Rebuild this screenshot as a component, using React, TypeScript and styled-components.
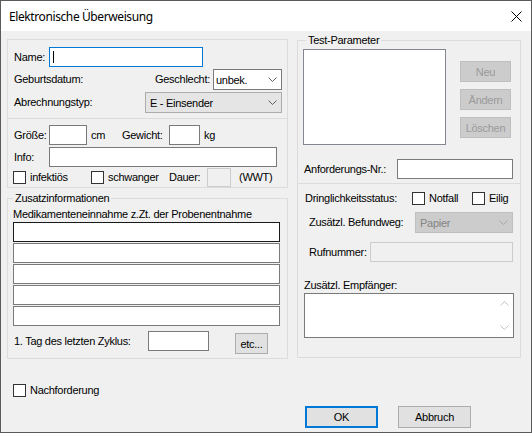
import React from 'react';
import styled, { createGlobalStyle } from 'styled-components';

const GlobalStyle = createGlobalStyle`
  html, body { margin: 0; padding: 0; background: #f0f0f0; }
  * { box-sizing: border-box; }
`;

const Window = styled.div`
  width: 532px;
  height: 433px;
  border: 1px solid #5b5b5b;
  background: #f0f0f0;
  display: flex;
  flex-direction: column;
  font-family: "Liberation Sans", Arial, sans-serif;
  font-size: 11px;
  letter-spacing: -0.28px;
  color: #000;
  overflow: hidden;
`;

const TitleBar = styled.div`
  height: 30px;
  flex-shrink: 0;
  background: #fff;
  display: flex;
  align-items: center;
  padding-left: 8px;
`;

const Title = styled.div`
  flex: 1;
  font-family: "Noto Sans", sans-serif;
  font-size: 12px;
  letter-spacing: -0.4px;
`;

const CloseBtn = styled.div`
  width: 30px;
  height: 30px;
  display: flex;
  align-items: center;
  justify-content: center;
`;

const Body = styled.div`
  display: flex;
  flex-direction: column;
  padding-left: 6px;
`;

const Columns = styled.div`
  display: flex;
  align-items: flex-start;
  gap: 9px;
`;

const Column = styled.div<{ $w: number; $mt: number }>`
  width: ${p => p.$w}px;
  margin-top: ${p => p.$mt}px;
  display: flex;
  flex-direction: column;
`;

const Panel = styled.div<{ $noTop?: boolean; $pad: string }>`
  border: 1px solid #dcdcdc;
  ${p => (p.$noTop ? 'border-top: none;' : '')}
  padding: ${p => p.$pad};
  display: flex;
  flex-direction: column;
`;

const Group = styled.fieldset<{ $pad: string; $mt?: number }>`
  margin: ${p => p.$mt ?? 0}px 0 0 0;
  min-width: 0;
  border: 1px solid #dcdcdc;
  padding: ${p => p.$pad};
  display: flex;
  flex-direction: column;
`;

const Legend = styled.legend<{ $ml?: number }>`
  padding: 0 2px;
  margin-left: ${p => p.$ml ?? 0}px;
  line-height: 13px;
  font-size: 11px;
`;

const Row = styled.div<{ $h: number; $mt?: number; $align?: string }>`
  display: flex;
  align-items: ${p => p.$align ?? 'center'};
  height: ${p => p.$h}px;
  margin-top: ${p => p.$mt ?? 0}px;
  flex-shrink: 0;
`;

const Label = styled.span<{ $w?: number; $ml?: number; $lh?: number }>`
  ${p => (p.$w ? `width: ${p.$w}px;` : '')}
  margin-left: ${p => p.$ml ?? 0}px;
  line-height: ${p => p.$lh ?? 13}px;
  white-space: nowrap;
  flex-shrink: 0;
`;

const Spacer = styled.div<{ $fixed?: number }>`
  flex: ${p => (p.$fixed !== undefined ? `0 0 ${p.$fixed}px` : '1')};
`;

const TextBox = styled.div<{ $w?: number; $h?: number; $tone?: 'focus' | 'hover' | 'normal'; $mt?: number; $ml?: number }>`
  ${p => (p.$w ? `width: ${p.$w}px;` : 'align-self: stretch;')}
  height: ${p => p.$h ?? 20}px;
  margin-top: ${p => p.$mt ?? 0}px;
  margin-left: ${p => p.$ml ?? 0}px;
  flex-shrink: 0;
  background: #fff;
  border: 1px solid
    ${p => (p.$tone === 'focus' ? '#0078d7' : p.$tone === 'hover' ? '#1a1a1a' : '#7a7a7a')};
  display: flex;
  align-items: center;
  padding-left: 3px;
`;

const Caret = styled.span`
  width: 1px;
  height: 12px;
  background: #000;
`;

const DisabledBox = styled.div<{ $w: number; $h: number; $ml?: number }>`
  width: ${p => p.$w}px;
  height: ${p => p.$h}px;
  margin-left: ${p => p.$ml ?? 0}px;
  flex-shrink: 0;
  background: #f0f0f0;
  border: 1px solid #cccccc;
`;

const comboStyles = {
  edit: { bg: '#fff', border: '#7a7a7a', color: '#000', pad: 2 },
  list: { bg: '#e5e5e5', border: '#acacac', color: '#000', pad: 4 },
  disabled: { bg: '#cccccc', border: '#bfbfbf', color: '#838383', pad: 4 },
};

const Combo = styled.div<{ $w: number; $variant: 'edit' | 'list' | 'disabled'; $ml?: number }>`
  width: ${p => p.$w}px;
  height: 21px;
  margin-left: ${p => p.$ml ?? 0}px;
  flex-shrink: 0;
  display: flex;
  align-items: center;
  background: ${p => comboStyles[p.$variant].bg};
  border: 1px solid ${p => comboStyles[p.$variant].border};
  color: ${p => comboStyles[p.$variant].color};
  padding-left: ${p => comboStyles[p.$variant].pad}px;
  padding-right: 4px;
`;

const ComboText = styled.span`
  flex: 1;
  white-space: nowrap;
`;

const Chevron = ({ color, up }: { color: string; up?: boolean }) => (
  <svg width="9" height="5" viewBox="0 0 9 5" style={{ display: 'block' }}>
    <polyline
      points={up ? '0.5,4.5 4.5,0.5 8.5,4.5' : '0.5,0.5 4.5,4.5 8.5,0.5'}
      fill="none"
      stroke={color}
      strokeWidth="1"
    />
  </svg>
);

const CheckItem = styled.div<{ $w?: number; $ml?: number }>`
  display: flex;
  align-items: center;
  ${p => (p.$w ? `width: ${p.$w}px;` : '')}
  margin-left: ${p => p.$ml ?? 0}px;
  flex-shrink: 0;
`;

const CheckBox = styled.span`
  width: 13px;
  height: 13px;
  background: #fff;
  border: 1px solid #333;
  flex-shrink: 0;
  margin-right: 4px;
`;

const Button = styled.div<{ $w: number; $h: number; $disabled?: boolean; $default?: boolean; $mt?: number; $ml?: number }>`
  width: ${p => p.$w}px;
  height: ${p => p.$h}px;
  margin-top: ${p => p.$mt ?? 0}px;
  margin-left: ${p => p.$ml ?? 0}px;
  flex-shrink: 0;
  display: flex;
  align-items: center;
  justify-content: center;
  background: ${p => (p.$disabled ? '#cccccc' : '#e1e1e1')};
  border: ${p => (p.$default ? '2px solid #0078d7' : `1px solid ${p.$disabled ? '#bfbfbf' : '#adadad'}`)};
  color: ${p => (p.$disabled ? '#9a9a9a' : '#000')};
`;

const ListBox = styled.div`
  width: 143px;
  height: 96px;
  background: #fff;
  border: 1px solid #828790;
  flex-shrink: 0;
`;

const ButtonStack = styled.div`
  display: flex;
  flex-direction: column;
  gap: 7px;
  margin-left: 14px;
  margin-top: 12px;
`;

const MultiLine = styled.div`
  height: 45px;
  margin-top: 1px;
  background: #fff;
  border: 1px solid #7a7a7a;
  display: flex;
  justify-content: flex-end;
`;

const ScrollCol = styled.div`
  width: 18px;
  display: flex;
  flex-direction: column;
  align-items: center;
  justify-content: space-between;
  padding: 7px 0 7px 0;
`;

const Footer = styled.div`
  display: flex;
  flex-direction: column;
`;

export default function App() {
  return (
    <>
      <GlobalStyle />
      <Window>
        <TitleBar>
          <Title>Elektronische Überweisung</Title>
          <CloseBtn>
            <svg width="11" height="11" viewBox="0 0 11 11">
              <path d="M0.5 0.5 L10.5 10.5 M10.5 0.5 L0.5 10.5" stroke="#000" strokeWidth="1" />
            </svg>
          </CloseBtn>
        </TitleBar>
        <Body>
          <Columns>
            <Column $w={281} $mt={8}>
              <Panel $pad="7px 5px 5px 6px">
                <Row $h={20}>
                  <Label $w={35}>Name:</Label>
                  <TextBox $w={154} $tone="focus">
                    <Caret />
                  </TextBox>
                </Row>
                <Row $h={21} $mt={2}>
                  <Label>Geburtsdatum:</Label>
                  <Spacer />
                  <Label>Geschlecht:</Label>
                  <Combo $w={69} $variant="edit" $ml={3}>
                    <ComboText>unbek.</ComboText>
                    <Chevron color="#606060" />
                  </Combo>
                </Row>
                <Row $h={21} $mt={2}>
                  <Label $w={131}>Abrechnungstyp:</Label>
                  <Combo $w={137} $variant="list">
                    <ComboText>E - Einsender</ComboText>
                    <Chevron color="#606060" />
                  </Combo>
                </Row>
              </Panel>
              <Panel $noTop $pad="6px 5px 0 6px">
                <Row $h={20}>
                  <Label $w={35}>Größe:</Label>
                  <TextBox $w={38} />
                  <Label $w={31} $ml={4}>cm</Label>
                  <Label $w={47}>Gewicht:</Label>
                  <TextBox $w={31} />
                  <Label $ml={4}>kg</Label>
                </Row>
                <Row $h={20} $mt={2}>
                  <Label $w={35}>Info:</Label>
                  <TextBox $w={228} />
                </Row>
                <Row $h={20}>
                  <CheckItem $w={78} $ml={-1}>
                    <CheckBox />
                    <Label>infektiös</Label>
                  </CheckItem>
                  <CheckItem $w={78}>
                    <CheckBox />
                    <Label>schwanger</Label>
                  </CheckItem>
                  <Label $w={38}>Dauer:</Label>
                  <DisabledBox $w={24} $h={19} />
                  <Label $ml={8}>(WWT)</Label>
                </Row>
              </Panel>
              <Group $pad="3px 7px 5px 5px" $mt={4}>
                <Legend>Zusatzinformationen</Legend>
                <Label>Medikamenteneinnahme z.Zt. der Probenentnahme</Label>
                <TextBox $mt={1} $tone="hover" />
                <TextBox $mt={1} />
                <TextBox $mt={1} />
                <TextBox $mt={1} />
                <TextBox $mt={1} />
                <Row $h={22} $mt={5} $align="flex-start">
                  <Label $w={134} $ml={1} $lh={20}>1. Tag des letzten Zyklus:</Label>
                  <TextBox $w={61} />
                  <Button $w={33} $h={21} $mt={2} $ml={26}>etc...</Button>
                </Row>
              </Group>
            </Column>
            <Column $w={224} $mt={3}>
              <Group $pad="2px 7px 4px 5px">
                <Legend $ml={3}>Test-Parameter</Legend>
                <Row $h={96} $align="flex-start">
                  <ListBox />
                  <ButtonStack>
                    <Button $w={51} $h={21} $disabled>Neu</Button>
                    <Button $w={51} $h={21} $disabled>Ändern</Button>
                    <Button $w={51} $h={21} $disabled>Löschen</Button>
                  </ButtonStack>
                </Row>
                <Row $h={20} $mt={14}>
                  <Label $w={93} $ml={1}>Anforderungs-Nr.:</Label>
                  <TextBox $w={116} />
                </Row>
              </Group>
              <Panel $noTop $pad="7px 6px 19px 6px">
                <Row $h={15}>
                  <Label $w={107} $ml={1}>Dringlichkeitsstatus:</Label>
                  <CheckItem $w={60}>
                    <CheckBox />
                    <Label>Notfall</Label>
                  </CheckItem>
                  <CheckItem>
                    <CheckBox />
                    <Label>Eilig</Label>
                  </CheckItem>
                </Row>
                <Row $h={21} $mt={6}>
                  <Label $ml={5}>Zusätzl. Befundweg:</Label>
                  <Spacer />
                  <Combo $w={98} $variant="disabled">
                    <ComboText>Papier</ComboText>
                    <Chevron color="#a6a6a6" />
                  </Combo>
                  <Spacer $fixed={1} />
                </Row>
                <Row $h={20} $mt={9}>
                  <Label $ml={5}>Rufnummer:</Label>
                  <Spacer />
                  <DisabledBox $w={143} $h={20} />
                  <Spacer $fixed={1} />
                </Row>
                <Row $h={13} $mt={17}>
                  <Label>Zusätzl. Empfänger:</Label>
                </Row>
                <MultiLine>
                  <ScrollCol>
                    <Chevron color="#c2c2c2" up />
                    <Chevron color="#c2c2c2" />
                  </ScrollCol>
                </MultiLine>
              </Panel>
            </Column>
          </Columns>
          <Footer>
            <Row $h={18} $mt={22}>
              <CheckItem $ml={6}>
                <CheckBox />
                <Label>Nachforderung</Label>
              </CheckItem>
            </Row>
            <Row $h={22} $mt={7}>
              <Button $w={73} $h={22} $default $ml={298}>OK</Button>
              <Button $w={73} $h={22} $ml={20}>Abbruch</Button>
            </Row>
          </Footer>
        </Body>
      </Window>
    </>
  );
}
